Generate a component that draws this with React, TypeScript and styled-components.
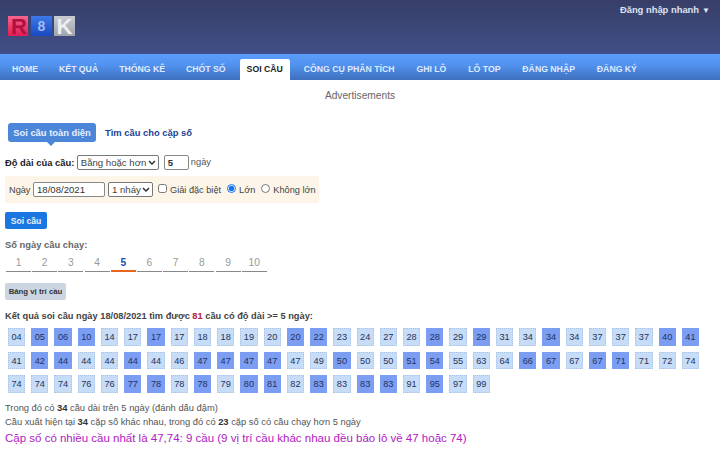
import React from "react";
import styled, { createGlobalStyle } from "styled-components";

const Global = createGlobalStyle`
  html, body { margin: 0; padding: 0; background: #fff; }
  body { font-family: "Liberation Sans", Arial, sans-serif; color: #333; overflow: hidden; }
`;
const chevron = "url(\"data:image/svg+xml,%3Csvg xmlns='http://www.w3.org/2000/svg' width='8' height='5'%3E%3Cpath d='M1 1l3 3 3-3' fill='none' stroke='%23333' stroke-width='1.5'/%3E%3C/svg%3E\")";
const Page = styled.div`width: 720px; height: 449px; overflow: hidden;`;
const Header = styled.header`
  height: 54px; box-sizing: border-box; background: linear-gradient(#373f68, #414f88);
  display: flex; justify-content: space-between; padding: 16px 10px 0 8px;
`;
const Logo = styled.svg`display: block; width: 68px; height: 32px; margin-top: -6px;`;
const QuickLogin = styled.div`
  font-size: 9.4px; font-weight: bold; color: #dfe3f2; margin-top: -12px; line-height: 12px;
  span { font-size: 8px; margin-left: 3px; }
`;
const Nav = styled.nav`
  height: 26px; box-sizing: border-box; padding: 5px 0 0 5px; display: flex; gap: 7px;
  background: linear-gradient(#5b9dfb 0%, #5293f0 40%, #3e70bd 100%);
`;
const NavItem = styled.a<{ $active?: boolean }>`
  padding: 0 7px; height: ${p => (p.$active ? "26px" : "21px")}; line-height: 21px;
  font-size: 8.7px; font-weight: bold; white-space: nowrap; border-radius: 2px 2px 0 0;
  color: ${p => (p.$active ? "#222" : "#dfeaff")};
  background: ${p => (p.$active ? "#fff" : "transparent")};
  &:nth-child(n + 7) { margin-left: 0.9px; }
`;
const Ads = styled.div`text-align: center; font-size: 10.2px; color: #666; line-height: 12px; margin-top: 10px;`;
const Content = styled.main`padding: 0 0 0 5px;`;
const TabBar = styled.div`display: flex; align-items: center; margin: 21px 0 0 3px; gap: 9px;`;
const Pill = styled.div`
  position: relative; width: 88px; height: 19px; line-height: 19px; text-align: center; box-sizing: border-box;
  background: #4c86d9; color: #e8f0ff; font-size: 9.4px; font-weight: bold; border-radius: 3px;
  &::after {
    content: ""; position: absolute; left: 39px; top: 19px; border: 4px solid transparent;
    border-top-color: #4c86d9; border-bottom: 0;
  }
`;
const PlainTab = styled.div`font-size: 9.4px; font-weight: bold; color: #1c3f94;`;
const LengthRow = styled.div`display: flex; align-items: center; margin-top: 12px; height: 16px; font-size: 9.3px; color: #555;`;
const Strong = styled.b`color: #222; margin-right: 2.5px; font-size: 9.4px;`;
const Select = styled.select<{ $w: number }>`
  appearance: none; width: ${p => p.$w}px; height: 15px; font: 9.6px "Liberation Sans", Arial, sans-serif; color: #444;
  padding: 0 10px 0 3px; box-sizing: border-box; border: 1px solid #777; border-radius: 2px;
  background: #fff ${chevron} no-repeat right 2px center;
`;
const Input = styled.input<{ $w: number; $bold?: boolean }>`
  width: ${p => p.$w}px; height: 15px; box-sizing: border-box; padding: 0 3px;
  font: ${p => (p.$bold ? "bold " : "")}9.6px "Liberation Sans", Arial, sans-serif; color: #333;
  border: 1px solid #888; border-radius: 2px; outline: none; background: #fff;
`;
const CountInput = styled(Input)`margin-left: 5px;`;
const Unit = styled.span`margin-left: 2px;`;
const DateBox = styled.div`
  margin-top: 6px; width: 314px; height: 27px; box-sizing: border-box; background: #fcf5e8;
  display: flex; align-items: center; padding-left: 4px; font-size: 9.2px; color: #444; white-space: nowrap;
`;
const DayWord = styled.span`margin-right: 3px; width: 21px;`;
const SelectGap = styled.span`width: 3px;`;
const Check = styled.input`width: 9px; height: 9px; margin: 0 3px 3px 0; accent-color: #1a73e8;`;
const Option = styled.label`
  display: flex; align-items: center; margin-left: 6px;
  &:first-of-type { margin-left: 5px; }
`;
const Submit = styled.button`
  display: block; margin-top: 9px; width: 42px; height: 17px; padding: 0; border: 0; border-radius: 2px;
  background: #1a76e0; color: #e8f2ff; font: bold 8.6px "Liberation Sans", Arial, sans-serif;
`;
const DaysLabel = styled.div`margin-top: 10px; font-size: 9.4px; font-weight: bold; color: #666; line-height: 11px;`;
const DayRow = styled.div`display: flex; gap: 1.2px; margin: 5px 0 0 1px;`;
const Day = styled.div<{ $active?: boolean }>`
  width: 25px; height: 17px; line-height: 15px; text-align: center; box-sizing: border-box;
  font-size: 10.2px; font-weight: ${p => (p.$active ? "bold" : "normal")};
  color: ${p => (p.$active ? "#1c4db0" : "#999")};
  border-bottom: ${p => (p.$active ? "2px solid #e8641c" : "1px solid #888")};
`;
const PosButton = styled.button`
  display: block; margin-top: 11px; width: 61px; height: 17px; padding: 0; border: 0; border-radius: 2px;
  background: #ccd6e2; color: #333; font: bold 7.8px "Liberation Sans", Arial, sans-serif;
`;
const Result = styled.div`margin-top: 10px; font-size: 9.28px; font-weight: bold; color: #444; line-height: 12px; b { color: #b3203c; }`;
const Grid = styled.div`display: flex; flex-wrap: wrap; gap: 6px 6px; margin: 6px 0 0 3px; width: 700px;`;
const Cell = styled.div<{ $hot?: boolean }>`
  width: 17.24px; height: 17.5px; line-height: 16px; text-align: center; box-sizing: border-box;
  font-size: 9.2px; color: #26335c;
  background: ${p => (p.$hot ? "#7b9df2" : "#c6dcf7")};
  border: 1px dotted ${p => (p.$hot ? "#7b9df2" : "#a9c4e6")};
`;
const Note = styled.div`font-size: 9.33px; color: #555; line-height: 14.5px; b { color: #333; }`;
const Notes = styled.div`margin-top: 8px;`;
const Big = styled.div`font-size: 11.5px; color: #b020c0; line-height: 15px; margin-top: 1px;`;

const rows: [string, number[]][] = [
  ["04 05 06 10 14 17 17 17 18 18 19 20 20 22 23 24 27 28 28 29 29 31 34 34 34 37 37 37 40 41", [1,2,3,6,12,13,18,20,23,28,29]],
  ["41 42 44 44 44 44 44 46 47 47 47 47 47 49 50 50 50 51 54 55 63 64 66 67 67 67 71 71 72 74", [1,2,5,8,9,10,11,14,17,18,22,23,25,26]],
  ["74 74 74 76 76 77 78 78 78 79 80 81 82 83 83 83 83 91 95 97 99", [5,6,8,10,11,13,15,16,18]],
];
const nav = ["HOME", "KẾT QUẢ", "THỐNG KÊ", "CHỐT SỐ", "SOI CẦU", "CÔNG CỤ PHÂN TÍCH", "GHI LÔ", "LÔ TOP", "ĐĂNG NHẬP", "ĐĂNG KÝ"];

export default function App() {
  return (
    <Page>
      <Global />
      <Header>
        <Logo viewBox="0 -6 68 32">
          <defs>
            <linearGradient id="lr" x1="0" y1="0" x2="0" y2="1"><stop offset="0" stopColor="#f4668e" /><stop offset="1" stopColor="#e01c54" /></linearGradient>
            <linearGradient id="lb" x1="0" y1="0" x2="0" y2="1"><stop offset="0" stopColor="#3c7ae8" /><stop offset="1" stopColor="#1a48c0" /></linearGradient>
            <linearGradient id="ls" x1="0" y1="0" x2="0" y2="1"><stop offset="0" stopColor="#c8ccd2" /><stop offset="1" stopColor="#9ea4ac" /></linearGradient>
          </defs>
          <rect x="0" y="0" width="20" height="20" fill="url(#lr)" />
          <rect x="23" y="0" width="21" height="20" fill="url(#lb)" />
          <rect x="46" y="0" width="21" height="20" fill="url(#ls)" />
          <text x="11" y="18" textAnchor="middle" fontFamily="Liberation Sans" fontWeight="bold" fontSize="22" fill="#b01040">R</text>
          <text x="33.5" y="15" textAnchor="middle" fontFamily="Liberation Sans" fontWeight="bold" fontSize="14" fill="#9dbcf0">8</text>
          <text x="56.5" y="18" textAnchor="middle" fontFamily="Liberation Sans" fontWeight="bold" fontSize="22" fill="#eceef2">K</text>
        </Logo>
        <QuickLogin>Đăng nhập nhanh<span>▼</span></QuickLogin>
      </Header>
      <Nav>{nav.map(n => <NavItem key={n} $active={n === "SOI CẦU"}>{n}</NavItem>)}</Nav>
      <Ads>Advertisements</Ads>
      <Content>
        <TabBar><Pill>Soi cầu toàn diện</Pill><PlainTab>Tìm cầu cho cặp số</PlainTab></TabBar>
        <LengthRow>
          <Strong>Độ dài của cầu:</Strong>
          <Select $w={82} defaultValue="a"><option value="a">Bằng hoặc hơn</option></Select>
          <CountInput $w={25} $bold defaultValue="5" />
          <Unit>ngày</Unit>
        </LengthRow>
        <DateBox>
          <DayWord>Ngày</DayWord>
          <Input $w={72} defaultValue="18/08/2021" />
          <SelectGap />
          <Select $w={45} defaultValue="a"><option value="a">1 nháy</option></Select>
          <Option><Check type="checkbox" />Giải đặc biệt</Option>
          <Option><Check type="radio" name="r" defaultChecked />Lớn</Option>
          <Option><Check type="radio" name="r" />Không lớn</Option>
        </DateBox>
        <Submit>Soi cầu</Submit>
        <DaysLabel>Số ngày cầu chạy:</DaysLabel>
        <DayRow>{[1,2,3,4,5,6,7,8,9,10].map(d => <Day key={d} $active={d === 5}>{d}</Day>)}</DayRow>
        <PosButton>Bảng vị trí cầu</PosButton>
        <Result>Kết quả soi cầu ngày 18/08/2021 tìm được <b>81</b> cầu có độ dài &gt;= 5 ngày:</Result>
        <Grid>
          {rows.flatMap(([s, hot], r) => s.split(" ").map((v, i) => <Cell key={r + "-" + i} $hot={hot.includes(i)}>{v}</Cell>))}
        </Grid>
        <Notes>
          <Note>Trong đó có <b>34</b> cầu dài trên 5 ngày (đánh dấu đậm)</Note>
          <Note>Cầu xuất hiện tại <b>34</b> cặp số khác nhau, trong đó có <b>23</b> cặp số có cầu chạy hơn 5 ngày</Note>
          <Big>Cặp số có nhiều cầu nhất là 47,74: 9 cầu (9 vị trí cầu khác nhau đều báo lô về 47 hoặc 74)</Big>
        </Notes>
      </Content>
    </Page>
  );
}
